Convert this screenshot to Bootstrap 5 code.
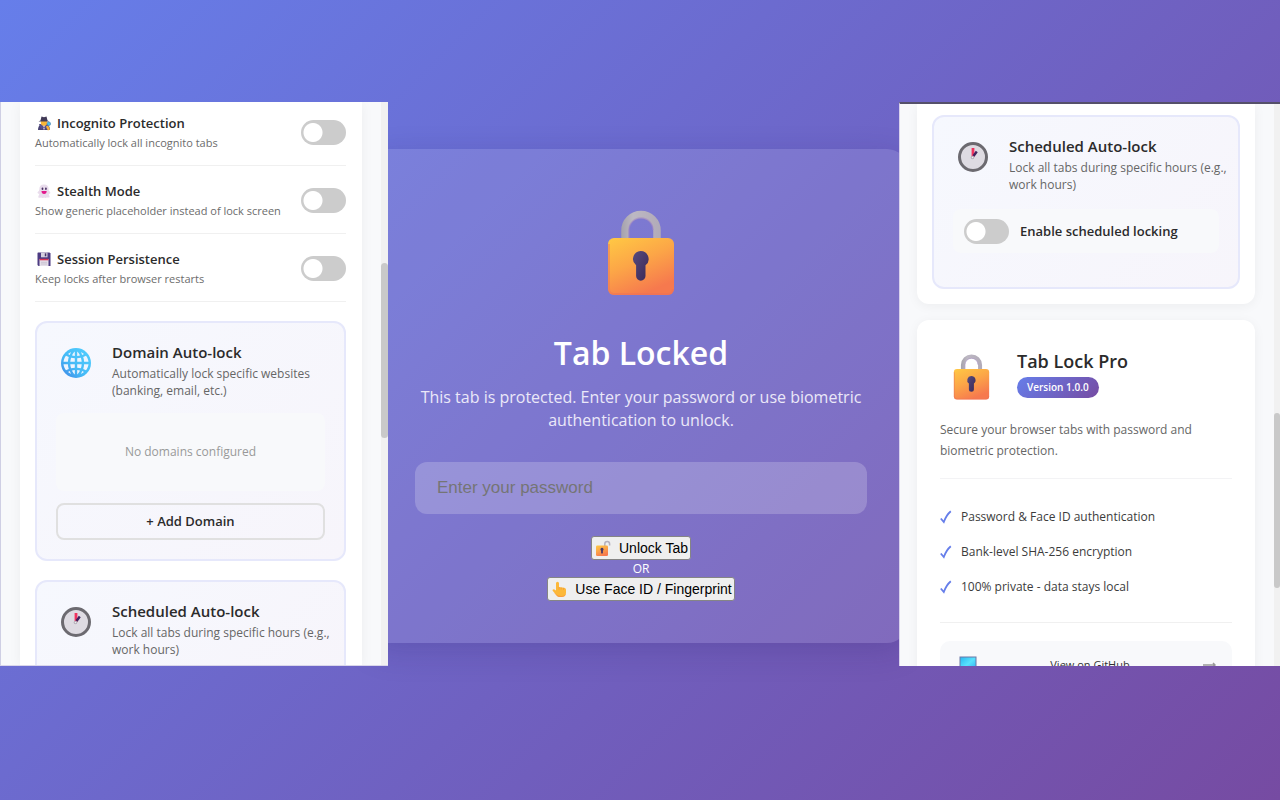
<!DOCTYPE html>
<html lang="en">
<head>
<meta charset="utf-8">
<meta name="viewport" content="width=device-width, initial-scale=1">
<title>Tab Lock Pro</title>
<link href="https://cdn.jsdelivr.net/npm/bootstrap@5.3.0/dist/css/bootstrap.min.css" rel="stylesheet">
<style>
  body { font-family: "Open Sans", "Noto Sans", sans-serif; color: #2b2b2b; background: linear-gradient(135deg, #667eea 0%, #764ba2 100%) fixed; }
  .stage { display: grid; grid-template-columns: 388fr 511fr 381fr; grid-template-rows: minmax(0, 1fr); padding: 102px 0 134px; }
  .stage > * { min-width: 0; }
  h1, h2, h3, p { margin: 0; }

  /* side panels */
  .pane { background: #f8f9fb; overflow: hidden; z-index: 1; }
  .pane-left { border-left: 1px solid #cfcfe4; border-bottom: 1px solid #d9d6ea; }
  .pane-right { border-top: 2px solid #55506a; border-left: 1px solid #d9d2ec; }
  .track { width: 7px; flex: none; background: #f1f1f1; }
  .pane-right .track { width: 6px; }
  .thumb { height: 175px; border-radius: 4px; background: #c9c9c9; }
  .pane-left .thumb { margin-top: 161px; }
  .pane-right .thumb { margin-top: 309px; }
  .sheet { background: #fff; box-shadow: 0 2px 12px rgba(0, 0, 0, .05); }
  .pane-left .sheet { margin: 0 19px; padding: 0 16px 0 15px; }
  .pane-right .sheet { margin: 0 19px 0 17px; }
  .sheet-end { border-radius: 0 0 12px 12px; padding: 11px 15px 15px; }
  .sheet-about { border-radius: 12px; padding: 30px 23px; }

  .options { margin-top: -4px; }
  .option { padding: 15px 0 12px; border-bottom: 1px solid #f0f0f0; }
  .option-name { font-size: 13px; line-height: 20px; font-weight: 600; gap: 6px; }
  .option-name svg { margin-left: 2px; }
  .option-note { font-size: 11px; line-height: 20px; color: #6c6c6c; }
  .toggle.form-check-input { width: 45px; height: 25px; margin: 0; border: 0; border-radius: 13px; float: none; flex: none;
    background: #ccc radial-gradient(circle at 12px 50%, #fff 9px, transparent 10px) no-repeat; }
  .option .toggle.form-check-input { margin-top: 7px; }

  .feature { border: 2px solid #e6e8fb; border-radius: 12px; padding: 19px; background: linear-gradient(135deg, #f6f8fe, #f7f5fb); }
  .feature + .feature, .options + .feature { margin-top: 19px; }
  .feature-head { gap: 16px; margin-right: -14px; }
  .feature-icon { width: 40px; height: 42px; }
  .feature-title { font-size: 15px; line-height: 20px; font-weight: 600; }
  .feature-note { font-size: 12px; line-height: 17px; color: #666; margin-top: 3px; }
  .inset { background: #f8f9fb; border-radius: 8px; margin-top: 14px; }
  .inset-empty { font-size: 12px; line-height: 18px; padding: 30px 0; color: #999; }
  .btn-add { height: 37px; margin-top: 12px; padding: 0; border: 2px solid #e0e0e0; border-radius: 8px; font-size: 13px; font-weight: 600; color: #2b2b2b; }
  .inset-toggle { padding: 9px 11px; gap: 11px; margin: 16px 0 15px; }
  .inset-toggle label { font-size: 13px; line-height: 26px; font-weight: 600; }

  .app-icon { width: 62px; margin-right: 15px; }
  .app-name { font-size: 18px; line-height: 22px; font-weight: 600; }
  .version { font-size: 10px; line-height: 21px; padding: 0 10px; margin-top: 5px; font-weight: 600; color: #fff; background: linear-gradient(135deg, #667eea, #764ba2); }
  .about-text { font-size: 12px; line-height: 21px; color: #666; margin-top: 19px; padding-bottom: 17px; border-bottom: 1px solid #f3f3f5; }
  .perks { padding: 20px 0 18px; border-bottom: 1px solid #f0f0f0; }
  .perks li { font-size: 12px; line-height: 35px; gap: 9px; color: #3c3c3c; }
  .repo { margin-top: 18px; padding: 14px 16px 14px 19px; border-radius: 10px; background: #f8f9fb; color: #333; font-size: 11px; line-height: 20px; }

  /* lock screen: its card runs on beneath both side panels */
  .lock-card { margin: 47px -8px 0 -20px; padding: 61px 40px 42px 47px; color: #fff; border-radius: 20px; background: rgba(255, 255, 255, .11); box-shadow: 0 8px 32px rgba(31, 20, 90, .18); }
  .lock-title { font-size: 32px; line-height: 44px; font-weight: 600; margin-top: 35px; }
  .lock-text { font-size: 16px; line-height: 23px; color: #ebe8f8; margin-top: 11px; }
  .pass.form-control { height: 52px; margin-top: 30px; padding: 0 22px; border: 0; border-radius: 12px; background: rgba(255, 255, 255, .2); font: 17px "Liberation Sans", sans-serif; color: #fff; }
  .pass.form-control::placeholder { color: #757575; opacity: 1; }
  .actions { margin-top: 22px; }
  .plain { height: 24px; padding: 0 2px 0 4px; gap: 8px; border: 1px solid #858585; border-radius: 3px; background: #efefef; color: #000; font: 14px "Liberation Sans", sans-serif; }
  .or { font-size: 12px; line-height: 17px; }
</style>
</head>
<body>
<svg class="position-absolute" width="0" height="0" aria-hidden="true">
  <defs>
    <linearGradient id="gold" x1="0" y1="0" x2=".5" y2="1"><stop offset="0" stop-color="#ffc944"/><stop offset=".5" stop-color="#fca647"/><stop offset="1" stop-color="#f6794e"/></linearGradient>
    <linearGradient id="steel" gradientUnits="userSpaceOnUse" x1="14" y1="0" x2="54" y2="0"><stop offset="0" stop-color="#a5a2ab"/><stop offset=".3" stop-color="#bdb8c3"/><stop offset="1" stop-color="#b1aab8"/></linearGradient>
    <linearGradient id="ink" x1="0" x2="1" y2="1"><stop offset="0" stop-color="#574b7e"/><stop offset="1" stop-color="#3b2856"/></linearGradient>
    <linearGradient id="sky" x1="1" y1="0" x2="0" y2="1"><stop offset="0" stop-color="#52d0ff"/><stop offset=".6" stop-color="#45b9f6"/><stop offset="1" stop-color="#3f82e4"/></linearGradient>
    <linearGradient id="screen" x2="1" y2="1"><stop offset="0" stop-color="#28b7f0"/><stop offset=".5" stop-color="#59e2fd"/><stop offset="1" stop-color="#2aa8ef"/></linearGradient>
    <symbol id="i-lock" viewBox="0 0 68 86">
      <path d="M18 30V20.500a16 16 0 0 1 32 0V30" fill="none" stroke="url(#steel)" stroke-width="7.500"/>
      <path d="M22 28V20a12 12 0 0 1 24 0" fill="none" stroke="#a287c4" stroke-width="1.500" opacity=".6"/>
      <rect x="1" y="28" width="66" height="57" rx="6" fill="url(#gold)"/>
      <path d="M2 34V79a5 5 0 0 0 5 5H61a5 5 0 0 0 5-5" fill="none" stroke="#ec6f5c" stroke-width="2" opacity=".45"/>
      <path d="M33.500 41a8 8 0 0 1 5 14.300V66a4.700 4.700 0 0 1-9.400 0V55.300A8 8 0 0 1 33.500 41z" fill="url(#ink)"/>
    </symbol>
    <symbol id="i-clock" viewBox="0 0 32 32">
      <circle cx="16" cy="16" r="13.500" fill="#dedbe2" stroke="#6c6a70" stroke-width="3"/>
      <path d="M16 16V7" stroke="#f0325f" stroke-width="2.800"/>
      <path d="M16.500 15 19.800 10.500" stroke="#40235e" stroke-width="2.400"/>
      <circle cx="15.500" cy="16.500" r="1.800" fill="#b4b0ba"/><circle cx="15.500" cy="16.500" r=".8" fill="#eee"/>
    </symbol>
    <symbol id="i-tick" viewBox="0 0 12 14"><path d="M.800 8.500 3.800 12C5.500 7.500 7.500 4 10.800 1.300" fill="none" stroke="#667eea" stroke-width="1.800"/></symbol>
  </defs>
</svg>

<main class="stage vh-100 overflow-hidden">

  <section class="pane pane-left d-flex" aria-label="Settings">
    <div class="sheet flex-grow-1">
      <div class="options">
        <div class="option d-flex justify-content-between">
          <div>
            <label class="option-name d-flex align-items-center" for="incognito">
              <svg width="14" height="16" viewBox="0 0 14 16" aria-hidden="true"><path d="M1 15c0-4 2-6 6-6s6 2 6 6z" fill="#494373"/><path d="M4 10 7 15 10 10z" fill="#cfc3d8"/><path d="M2 9h3l2 4-3 1zM12 9H9l-2 4 3 1z" fill="#56508c"/><circle cx="7" cy="7.500" r="3.200" fill="#f9b638"/><path d="M3.500 5.500 4.500 1.500 7 2.300 9.500 1.500 10.500 5.500 12.500 6.500H1.500z" fill="#413a57"/><path d="M10 11l2 4" stroke="#f6ad35" stroke-width="2.500"/><circle cx="11.800" cy="8.800" r="1.800" fill="#3fc1f2" stroke="#487aa8" stroke-width=".6"/></svg>
              Incognito Protection</label>
            <div class="option-note">Automatically lock all incognito tabs</div>
          </div>
          <input class="form-check-input toggle" type="checkbox" role="switch" id="incognito">
        </div>
        <div class="option d-flex justify-content-between">
          <div>
            <label class="option-name d-flex align-items-center" for="stealth">
              <svg width="14" height="16" viewBox="0 0 14 16" aria-hidden="true"><path d="M2.300 6.500C2.300 3 4 1.500 7 1.500s4.700 1.500 4.700 5c0 2 2 2 1.600 3.500-.3 1-1.600.8-1.600.8.200 1.800 1.300 2.200.8 3.400-.8.900-2 0-2.800.3-1 .8-1.800.4-2.700 0-1.300.8-2.200.5-3 0-1 .4-2.300.6-2.700-.3-.2-1.300 1-1.800 1-3.400 0 0-1.600 0-1.800-1C.300 8.500 2.300 8.500 2.300 6.500z" fill="#e9dcec"/><ellipse cx="5.500" cy="5.800" rx=".9" ry="1.300" fill="#493163"/><ellipse cx="8.900" cy="5.800" rx=".9" ry="1.300" fill="#493163"/><path d="M4.500 8h5.200c0 2-1 3-2.600 3S4.500 10 4.500 8z" fill="#e3198b"/></svg>
              Stealth Mode</label>
            <div class="option-note">Show generic placeholder instead of lock screen</div>
          </div>
          <input class="form-check-input toggle" type="checkbox" role="switch" id="stealth">
        </div>
        <div class="option d-flex justify-content-between">
          <div>
            <label class="option-name d-flex align-items-center" for="session">
              <svg width="14" height="16" viewBox="0 0 14 16" aria-hidden="true"><path d="M1 1.500h11.500l1 1V15H1.500L.500 14V2z" fill="#4c3b82"/><path d="M4 1.500h6.500v4.800H4z" fill="#d6d0df"/><path d="M7.800 2.300h1.500v3H7.800z" fill="#473568"/><path d="M2.500 8h9v7h-9z" fill="#e4dfe9"/><path d="M2.500 7.800h9v1.500h-9z" fill="#dc3555"/><path d="M4 11.300h6M4 13h6" stroke="#b9b2c4" stroke-width=".6"/></svg>
              Session Persistence</label>
            <div class="option-note">Keep locks after browser restarts</div>
          </div>
          <input class="form-check-input toggle" type="checkbox" role="switch" id="session">
        </div>
      </div>

      <div class="feature">
        <div class="feature-head d-flex">
          <div class="feature-icon d-flex align-items-center justify-content-center flex-shrink-0">
            <svg width="32" height="32" viewBox="0 0 32 32" aria-hidden="true"><circle cx="16" cy="16" r="15" fill="url(#sky)"/><path fill="#eef4fe" d="M3.500 14.800c.3-2.400 1.200-4.400 2.500-6l2.800 1.300a20 20 0 0 0-.9 4.700zM28.500 14.800c-.3-2.400-1.200-4.400-2.500-6l-2.800 1.300c.5 1.500.8 3 .9 4.700zM3.500 17.200c.3 2.400 1.200 4.400 2.500 6l2.800-1.300a20 20 0 0 1-.9-4.700zM28.500 17.200c-.3 2.400-1.200 4.400-2.500 6l-2.800-1.300c.5-1.500.8-3 .9-4.700zM10.300 14.800c.1-1.500.4-2.900.8-4.100 1.200.3 2.400.5 3.700.5v3.600zM21.700 14.800c-.1-1.500-.4-2.900-.8-4.100-1.200.3-2.400.5-3.700.5v3.600zM10.300 17.200c.1 1.500.4 2.900.8 4.100 1.200-.3 2.400-.5 3.700-.5v-3.600zM21.700 17.200c-.1 1.500-.4 2.900-.8 4.100-1.200-.3-2.400-.5-3.700-.5v-3.600zM12 8.400c.7-1.700 1.700-3.200 2.800-4v4.500c-1 0-1.900-.2-2.800-.5zM20 8.400c-.7-1.700-1.700-3.200-2.800-4v4.500c1 0 1.900-.2 2.800-.5zM12 23.600c.7 1.700 1.700 3.200 2.800 4v-4.500c-1 0-1.900.2-2.800.5zM20 23.600c-.7 1.700-1.700 3.200-2.800 4v-4.500c1 0 1.900.2 2.800.5zM8 7l3-2-1.200 2.900zM24 7l-3-2 1.200 2.900zM8 25l3 2-1.200-2.900zM24 25l-3 2 1.200-2.900z"/></svg>
          </div>
          <div>
            <h2 class="feature-title">Domain Auto-lock</h2>
            <p class="feature-note">Automatically lock specific websites<br>(banking, email, etc.)</p>
          </div>
        </div>
        <div class="inset inset-empty text-center">No domains configured</div>
        <button type="button" class="btn btn-add w-100">+ Add Domain</button>
      </div>

      <div class="feature">
        <div class="feature-head d-flex">
          <div class="feature-icon d-flex align-items-center justify-content-center flex-shrink-0"><svg width="32" height="32" aria-hidden="true"><use href="#i-clock"/></svg></div>
          <div>
            <h2 class="feature-title">Scheduled Auto-lock</h2>
            <p class="feature-note">Lock all tabs during specific hours (e.g.,<br>work hours)</p>
          </div>
        </div>
      </div>
    </div>
    <div class="track" aria-hidden="true"><div class="thumb"></div></div>
  </section>

  <section aria-label="Lock screen">
    <form class="lock-card text-center">
      <svg width="68" height="86" class="d-block mx-auto" aria-hidden="true"><use href="#i-lock"/></svg>
      <h1 class="lock-title">Tab Locked</h1>
      <p class="lock-text">This tab is protected. Enter your password or use biometric authentication to unlock.</p>
      <input type="password" class="form-control pass" placeholder="Enter your password" aria-label="Enter your password">
      <div class="actions d-flex flex-column align-items-center">
        <button type="button" class="plain d-inline-flex align-items-center">
          <svg width="15" height="17" viewBox="0 0 15 17" aria-hidden="true"><path d="M8.800 6V4a2.400 2.400 0 0 1 4.800 0v1.500" fill="none" stroke="#b5b0bd" stroke-width="1.500"/><rect y="5.500" width="12" height="10.500" rx="1.300" fill="url(#gold)"/><path d="M6 7.800a1.600 1.600 0 0 1 .9 2.900v2a.9.9 0 0 1-1.800 0v-2A1.600 1.600 0 0 1 6 7.800z" fill="#4a3768"/></svg>
          Unlock Tab</button>
        <div class="or">OR</div>
        <button type="button" class="plain d-inline-flex align-items-center">
          <svg width="15" height="17" viewBox="0 0 15 17" aria-hidden="true"><path d="M4 9.500V2.300a1.500 1.500 0 0 1 3 0V6l5 .8c1.300.3 2 .9 2 2.200v3c0 2.500-1.800 4-4.200 4H8c-1.700 0-2.800-.6-3.800-2L.700 9.800C0 8.800 1.400 7.700 2.400 8.400z" fill="#fcb83a"/><path d="M9.200 6.500v2M11.500 6.900v2M7 6v2.800" stroke="#f09a36" stroke-width=".7"/><path d="M2 12 4.200 14c1 1.400 2.100 2 3.800 2h1.800c2 0 3.600-1 4.100-3-1.500 1.700-3 2-5 2S5 14.500 3.700 12.800z" fill="#f58b45" opacity=".6"/></svg>
          Use Face ID / Fingerprint</button>
      </div>
    </form>
  </section>

  <section class="pane pane-right d-flex" aria-label="About">
    <div class="flex-grow-1">
      <div class="sheet sheet-end">
        <div class="feature">
          <div class="feature-head d-flex">
            <div class="feature-icon d-flex align-items-center justify-content-center flex-shrink-0"><svg width="32" height="32" aria-hidden="true"><use href="#i-clock"/></svg></div>
            <div>
              <h2 class="feature-title">Scheduled Auto-lock</h2>
              <p class="feature-note">Lock all tabs during specific hours (e.g.,<br>work hours)</p>
            </div>
          </div>
          <div class="inset inset-toggle d-flex align-items-center">
            <input class="form-check-input toggle" type="checkbox" role="switch" id="schedule">
            <label for="schedule">Enable scheduled locking</label>
          </div>
        </div>
      </div>

      <div class="pt-3">
        <div class="sheet sheet-about">
          <div class="d-flex">
            <div class="app-icon d-flex justify-content-center flex-shrink-0"><svg width="37" height="46" class="mt-1" aria-hidden="true"><use href="#i-lock"/></svg></div>
            <div>
              <h2 class="app-name">Tab Lock Pro</h2>
              <div class="version d-inline-block rounded-pill">Version 1.0.0</div>
            </div>
          </div>
          <p class="about-text">Secure your browser tabs with password and<br>biometric protection.</p>
          <ul class="perks list-unstyled mb-0">
            <li class="d-flex align-items-center"><svg width="12" height="14" aria-hidden="true"><use href="#i-tick"/></svg>Password &amp; Face ID authentication</li>
            <li class="d-flex align-items-center"><svg width="12" height="14" aria-hidden="true"><use href="#i-tick"/></svg>Bank-level SHA-256 encryption</li>
            <li class="d-flex align-items-center"><svg width="12" height="14" aria-hidden="true"><use href="#i-tick"/></svg>100% private - data stays local</li>
          </ul>
          <a class="repo d-flex align-items-center justify-content-between text-decoration-none" href="#">
            <svg width="18" height="18" viewBox="0 0 18 18" aria-hidden="true"><rect x="1" y="1" width="16" height="14" fill="url(#screen)" stroke="#6b79a8"/><path d="M0 15h18v2H0z" fill="#8d8a9a"/></svg>
            <span>View on GitHub</span>
            <svg width="13" height="6" viewBox="0 0 13 6" aria-hidden="true"><path d="M0 3h12M10 1l2 2-2 2" fill="none" stroke="#999" stroke-width="1.500"/></svg>
          </a>
        </div>
      </div>
    </div>
    <div class="track" aria-hidden="true"><div class="thumb"></div></div>
  </section>
</main>
<script src="https://cdn.jsdelivr.net/npm/bootstrap@5.3.0/dist/js/bootstrap.bundle.min.js"></script>
</body>
</html>
